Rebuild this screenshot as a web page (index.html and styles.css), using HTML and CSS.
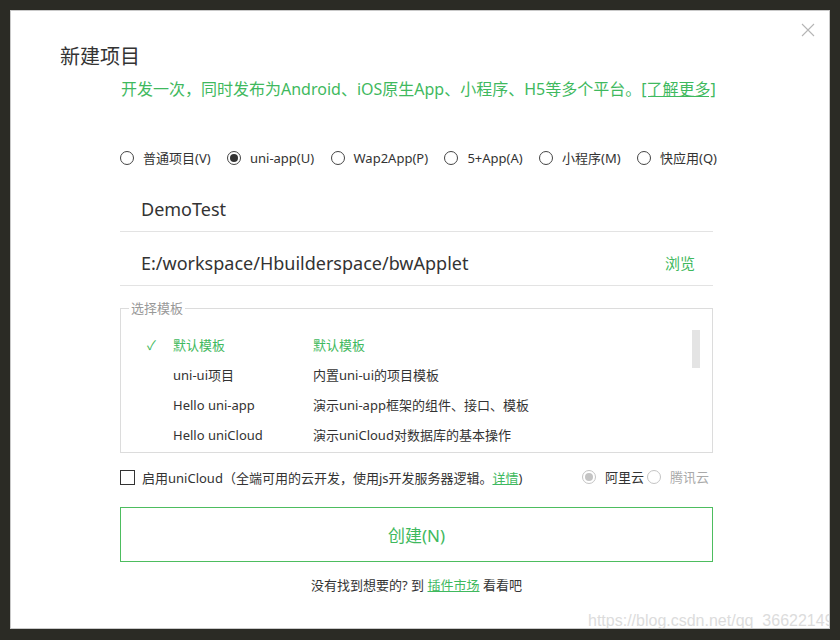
FILE: index.html
```html
<!DOCTYPE html>
<html lang="zh-CN">
<head>
<meta charset="utf-8">
<title>新建项目</title>
<link rel="stylesheet" href="styles.css">
</head>
<body>
<div class="panel">
  <svg class="close" width="14" height="14" viewBox="0 0 14 14"><path d="M1 1L13 13M13 1L1 13" stroke="#b5b5b5" stroke-width="1.1" fill="none"/></svg>
  <div class="title">新建项目</div>
  <div class="subtitle">开发一次，同时发布为Android、iOS原生App、小程序、H5等多个平台。<span class="link">[了解更多]</span></div>
  <div class="main">
    <div class="types">
      <label class="radio"><span class="circle"></span><span>普通项目(V)</span></label>
      <label class="radio"><span class="circle on"></span><span>uni-app(U)</span></label>
      <label class="radio"><span class="circle"></span><span>Wap2App(P)</span></label>
      <label class="radio"><span class="circle"></span><span>5+App(A)</span></label>
      <label class="radio"><span class="circle"></span><span>小程序(M)</span></label>
      <label class="radio"><span class="circle"></span><span>快应用(Q)</span></label>
    </div>
    <div class="field first"><span class="value">DemoTest</span></div>
    <div class="field second"><span class="value">E:/workspace/Hbuilderspace/bwApplet</span><span class="browse">浏览</span></div>
    <fieldset class="templates">
      <legend>选择模板</legend>
      <div class="list">
        <div class="row selected"><span class="check">✓</span><span>默认模板</span><span>默认模板</span></div>
        <div class="row"><span class="check"></span><span>uni-ui项目</span><span>内置uni-ui的项目模板</span></div>
        <div class="row"><span class="check"></span><span>Hello uni-app</span><span>演示uni-app框架的组件、接口、模板</span></div>
        <div class="row"><span class="check"></span><span>Hello uniCloud</span><span>演示uniCloud对数据库的基本操作</span></div>
        <div class="thumb"></div>
      </div>
    </fieldset>
    <div class="cloud">
      <label class="cb"><span class="box"></span><span>启用uniCloud（全端可用的云开发，使用js开发服务器逻辑。<span class="link">详情</span>)</span></label>
      <div class="providers">
        <label class="radio dis"><span class="circle on"></span><span class="dark">阿里云</span></label>
        <label class="radio dis"><span class="circle"></span><span>腾讯云</span></label>
      </div>
    </div>
    <div class="create">创建(N)</div>
    <div class="footer">没有找到想要的? 到 <span class="link">插件市场</span> 看看吧</div>
  </div>
  <div class="watermark">https://blog.csdn.net/qq_36622149</div>
</div>
</body>
</html>
```
FILE: styles.css
```css
* { box-sizing: border-box; }
html, body { margin: 0; padding: 0; }
body {
  background: #2b2b25;
  width: 840px;
  height: 640px;
  overflow: hidden;
  font-family: "Noto Sans", "Noto Sans CJK SC", sans-serif;
  color: #333;
}
.panel {
  position: relative;
  margin: 10px;
  width: 820px;
  height: 619px;
  background: #fff;
  border: 1px solid #c9c9c9;
  padding-top: 34px;
  overflow: hidden;
}
.close { position: absolute; top: 12px; right: 14px; }
.title {
  margin-left: 49px;
  font-size: 20px;
  line-height: 24px;
  color: #333;
}
.subtitle {
  margin-left: 110px;
  margin-top: 9px;
  font-size: 16px;
  line-height: 22px;
  color: #3fb95e;
}
.link { color: #3fb95e; text-decoration: underline; }
.main {
  margin-left: 109px;
  width: 593px;
}
.types {
  margin-top: 48px;
  width: 597px;
  height: 20px;
  display: flex;
  justify-content: space-between;
  align-items: center;
  font-size: 13px;
}
.radio { display: flex; align-items: center; gap: 9px; line-height: 20px; }
.circle {
  width: 14px; height: 14px;
  border: 1.3px solid #444;
  border-radius: 50%;
  display: flex; align-items: center; justify-content: center;
}
.circle.on::after {
  content: ""; width: 8px; height: 8px; border-radius: 50%; background: #333;
}
.field {
  display: flex;
  justify-content: space-between;
  align-items: center;
  border-bottom: 1px solid #e3e3e3;
  padding-left: 21px;
  padding-right: 18px;
  font-size: 18px;
  line-height: 24px;
}
.field.first { margin-top: 18px; padding-top: 11px; padding-bottom: 10px; }
.field.second { padding-top: 19px; padding-bottom: 10px; }
.browse { color: #3fb95e; font-size: 15px; }
.templates {
  margin: 13px 0 0 0;
  padding: 0;
  border: 1px solid #dcdcdc;
}
.templates legend {
  margin-left: 8px;
  padding: 0 2px;
  font-size: 13px;
  line-height: 18px;
  color: #999;
}
.list {
  position: relative;
  height: 135px;
  padding-top: 13px;
  overflow: hidden;
}
.row {
  display: grid;
  grid-template-columns: 26px 140px 1fr;
  padding-left: 26px;
  height: 30px;
  line-height: 30px;
  font-size: 13px;
  color: #333;
}
.row.selected { color: #3fb95e; }
.check { font-size: 13px; color: #3fb95e; }
.thumb {
  position: absolute;
  top: 13px; right: 12px;
  width: 8px; height: 38px;
  background: #e4e4e4;
}
.cloud {
  margin-top: 14px;
  height: 20px;
  display: flex;
  justify-content: space-between;
  align-items: center;
  font-size: 13px;
}
.cb { display: flex; align-items: center; gap: 7px; }
.box { width: 15px; height: 15px; border: 1.3px solid #333; }
.providers { display: flex; gap: 0; margin-right: 4px; }
.radio.dis { color: #aaa; gap: 9px; }
.radio.dis .circle { border-color: #c4c4c4; }
.radio.dis .circle.on::after { background: #c4c4c4; }
.dark { color: #333; margin-right: 3px; }
.create {
  margin-top: 20px;
  height: 55px;
  border: 1px solid #4dbd5f;
  display: flex;
  align-items: center;
  justify-content: center;
  font-size: 17px;
  color: #3fb95e;
}
.footer {
  margin-top: 13px;
  text-align: center;
  font-size: 13px;
  line-height: 20px;
}
.watermark {
  position: absolute;
  left: 577px;
  top: 601px;
  font-family: "Liberation Sans", Arial, sans-serif;
  font-size: 16px;
  color: #dcdcdc;
  white-space: nowrap;
}
```
